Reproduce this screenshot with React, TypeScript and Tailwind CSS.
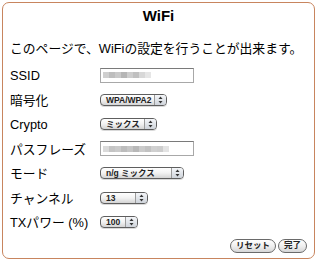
import React from "react";

const FONT = '"Liberation Sans", "Noto Sans CJK JP", sans-serif';

function Arrows() {
  return (
    <svg width="5" height="8" viewBox="0 0 5 8">
      <path d="M0.5 3 L2.5 0.5 L4.5 3 Z" fill="#333" />
      <path d="M0.5 5 L2.5 7.5 L4.5 5 Z" fill="#333" />
    </svg>
  );
}

function Select({ text, w }: { text: string; w: string }) {
  return (
    <div
      className={`${w} h-[12px] mb-[3px] flex items-stretch rounded-[4px] border border-[#5e5e5e] bg-gradient-to-b from-white via-[#f2f2f2] to-[#d4d4d4] shadow-[0_1px_0_rgba(0,0,0,0.15)]`}
    >
      <div className="flex-1 flex items-center pl-[5px] text-[8.5px] font-bold text-[#222] leading-none whitespace-nowrap overflow-hidden">
        {text}
      </div>
      <div className="w-[12px] border-l border-[#9a9a9a] bg-gradient-to-b from-[#f4f6f9] to-[#cfd4db] rounded-r-[3px] flex items-center justify-center">
        <Arrows />
      </div>
    </div>
  );
}

function BlurInput({ blocks }: { blocks: string[] }) {
  return (
    <div className="w-[94px] h-[15px] mb-[3px] border border-[#a8a8a8] border-t-[#7a7a7a] bg-white flex items-center pl-[2px] overflow-hidden">
      <div className="flex items-center h-[7px] blur-[0.6px]">
        {blocks.map((c, i) => (
          <div key={i} className="w-[6px] h-[6px]" style={{ background: c }} />
        ))}
      </div>
    </div>
  );
}

function Row({ label, children }: { label: string; children: React.ReactNode }) {
  return (
    <div className="h-[24.5px] flex items-center">
      <div className="w-[90px] text-[12.8px] text-black leading-none whitespace-nowrap">{label}</div>
      {children}
    </div>
  );
}

function Btn({ text, w }: { text: string; w: string }) {
  return (
    <div
      className={`${w} h-[14px] rounded-full border border-[#6a6a6a] bg-gradient-to-b from-white via-[#f0f0f0] to-[#d6d6d6] flex items-center justify-center text-[8.5px] font-bold text-[#222] leading-none`}
    >
      {text}
    </div>
  );
}

export default function App() {
  return (
    <div className="w-[320px] h-[264px] bg-white pt-[2px] pl-[2px]" style={{ fontFamily: FONT }}>
      <div className="w-[313px] h-[257px] border border-[#c8855e] rounded-[7px] pl-[7px] pr-[7px]">
        <div className="pt-[4px] h-[22px] flex items-center justify-center text-[15px] font-bold leading-[18px] text-black">
          WiFi
        </div>
        <div className="mt-[15px] h-[18px] flex items-center text-[12.8px] leading-[18px] text-black whitespace-nowrap">
          このページで、WiFiの設定を行うことが出来ます。
        </div>
        <div className="mt-[6.5px]">
          <Row label="SSID">
            <BlurInput
              blocks={["#cfcfcf", "#bdbdbd", "#c9c9c9", "#b5b5b5", "#cdcdcd", "#c0c0c0", "#d8d8d8", "#e6e6e6"]}
            />
          </Row>
          <Row label="暗号化">
            <Select text="WPA/WPA2" w="w-[67px]" />
          </Row>
          <Row label="Crypto">
            <Select text="ミックス" w="w-[57px]" />
          </Row>
          <Row label="パスフレーズ">
            <BlurInput
              blocks={["#dadada", "#c4c4c4", "#cacaca", "#bcbcbc", "#c6c6c6", "#b8b8b8", "#cbcbcb", "#c2c2c2", "#d0d0d0", "#cdcdcd", "#e3e3e3"]}
            />
          </Row>
          <Row label="モード">
            <Select text="n/g ミックス" w="w-[84px]" />
          </Row>
          <Row label="チャンネル">
            <Select text="13" w="w-[48px]" />
          </Row>
          <Row label="TXパワー (%)">
            <Select text="100" w="w-[38px]" />
          </Row>
        </div>
        <div className="mt-[2.5px] flex justify-end gap-[2px]">
          <Btn text="リセット" w="w-[46px]" />
          <Btn text="完了" w="w-[29px]" />
        </div>
      </div>
    </div>
  );
}
